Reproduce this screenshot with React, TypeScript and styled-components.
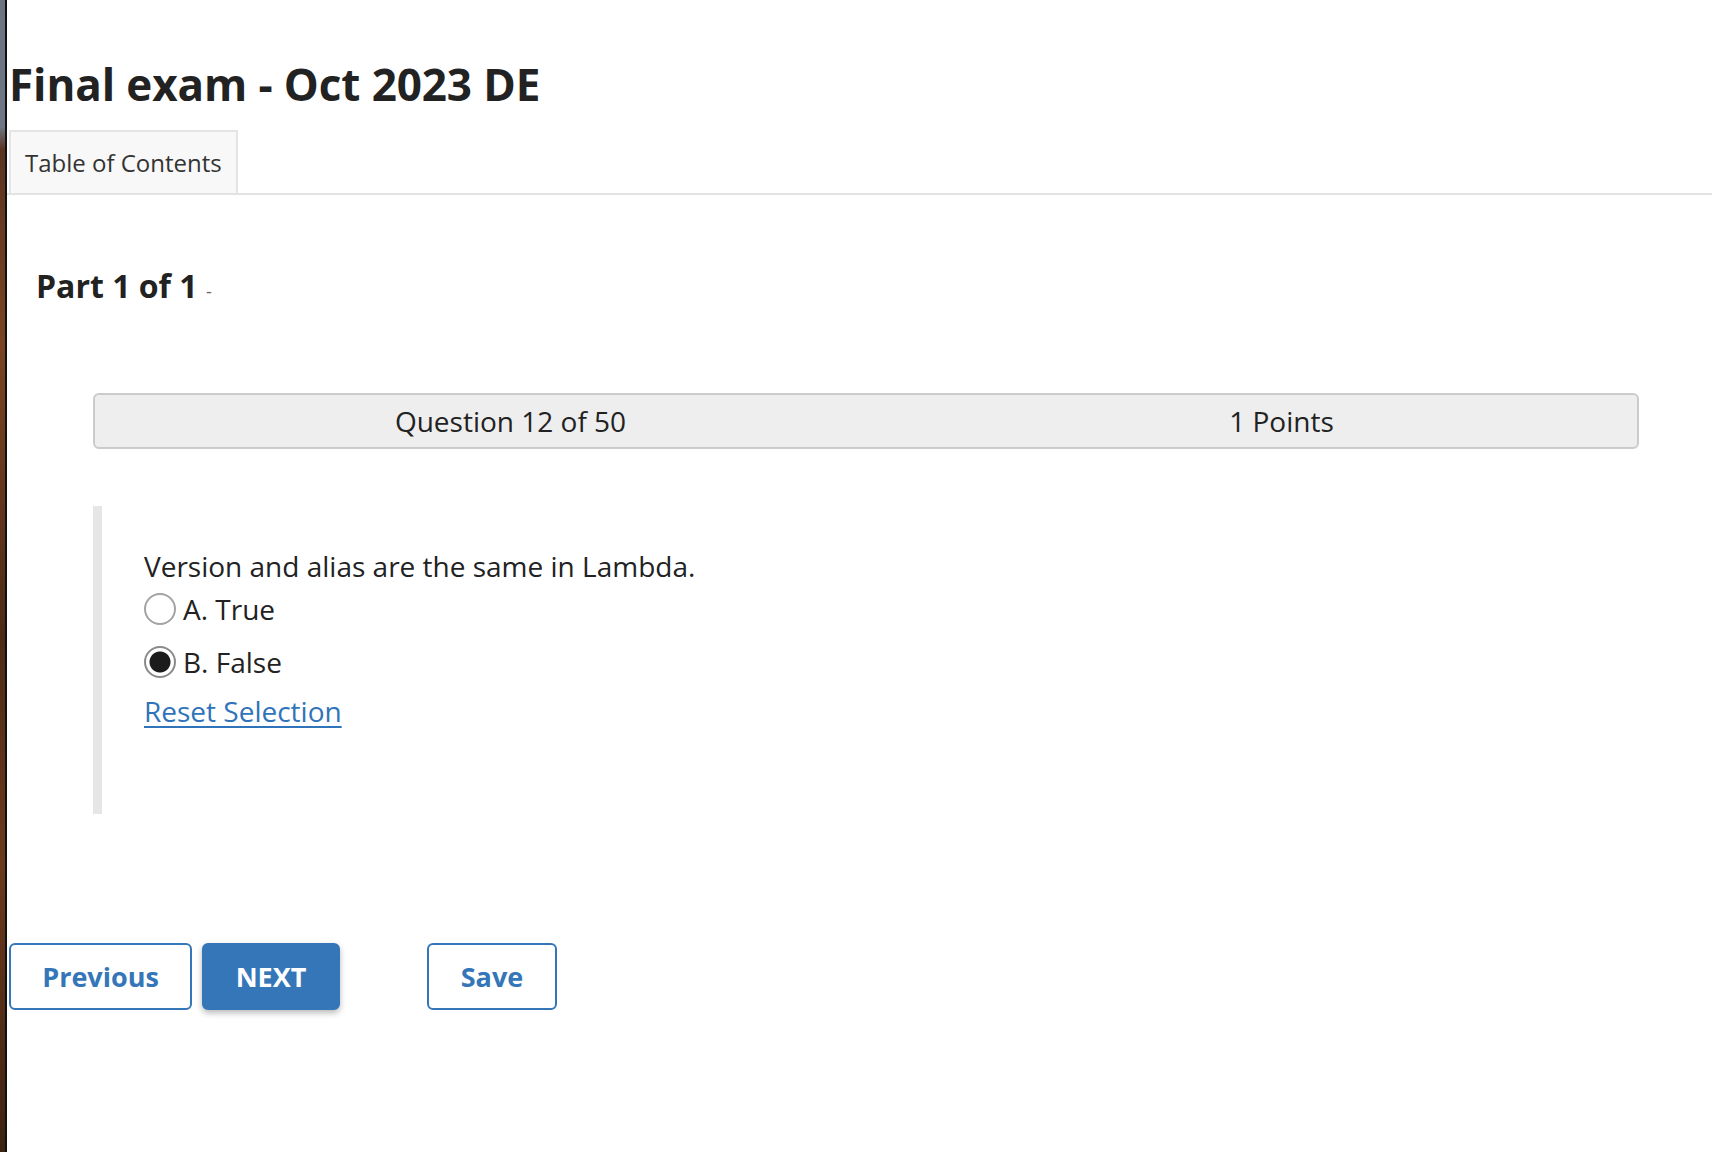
import React from "react";
import styled, { createGlobalStyle } from "styled-components";

const GlobalStyle = createGlobalStyle`
  html, body {
    margin: 0;
    padding: 0;
    background: #ffffff;
  }
  body {
    font-family: "Open Sans", "Noto Sans", Arial, sans-serif;
    color: #262626;
  }
`;

const App: React.FC = () => {
  return (
    <Page>
      <GlobalStyle />
      <DesktopEdge />
      <Main>
        <Title>Final exam - Oct 2023 DE</Title>
        <Tabs>
          <Tab>Table of Contents</Tab>
        </Tabs>
        <PartHeading>
          Part 1 of 1 <small>-</small>
        </PartHeading>
        <QuestionBar>
          <span>Question 12 of 50</span>
          <span>1 Points</span>
        </QuestionBar>
        <QuestionBody>
          <QuestionText>Version and alias are the same in Lambda.</QuestionText>
          <Options>
            <Option>
              <Radio type="radio" name="q12" />
              A. True
            </Option>
            <Option>
              <Radio type="radio" name="q12" defaultChecked />
              B. False
            </Option>
          </Options>
          <ResetLink href="#">Reset Selection</ResetLink>
        </QuestionBody>
        <Actions>
          <Button width={183}>Previous</Button>
          <Button width={138} primary>
            NEXT
          </Button>
          <SaveButton width={130}>Save</SaveButton>
        </Actions>
      </Main>
    </Page>
  );
};

const Page = styled.div`
  display: flex;
  min-height: 100vh;
  box-sizing: border-box;
`;

const DesktopEdge = styled.div`
  width: 5px;
  flex-shrink: 0;
  border-right: 2px solid #111;
  background: linear-gradient(
    180deg,
    #6c7482 0%,
    #6e7584 11%,
    #5a3320 13%,
    #7a4422 30%,
    #4e2a16 55%,
    #6b3a1c 75%,
    #3d2212 100%
  );
`;

const Main = styled.div`
  flex: 1;
  display: flex;
  flex-direction: column;
`;

const Title = styled.h1`
  margin: 58px 0 19px 2px;
  font-size: 44px;
  line-height: 53px;
  font-weight: 700;
  color: #222;
  letter-spacing: -0.1px;
`;

const Tabs = styled.div`
  display: flex;
  border-bottom: 2px solid #e3e3e3;
  padding-left: 2px;
`;

const Tab = styled.div`
  display: flex;
  align-items: center;
  height: 61px;
  padding: 0 14px;
  background: #f8f8f8;
  border: 2px solid #e4e4e4;
  border-bottom: none;
  font-size: 24px;
  color: #333;
`;

const PartHeading = styled.h2`
  margin: 72px 0 0 29px;
  font-size: 32px;
  line-height: 37px;
  font-weight: 700;
  color: #222;
  small {
    font-size: 18px;
    font-weight: 400;
    color: #666;
  }
`;

const QuestionBar = styled.div`
  display: grid;
  grid-template-columns: 1fr 1fr;
  align-items: center;
  height: 52px;
  margin: 83px 73px 0 86px;
  background: #eeeeee;
  border: 2px solid #cbcbcb;
  border-radius: 6px;
  font-size: 28px;
  color: #222;
  span {
    text-align: center;
    padding-left: 60px;
  }
`;

const QuestionBody = styled.div`
  margin: 57px 0 0 86px;
  border-left: 9px solid #e6e6e6;
  padding: 40px 0 83px 42px;
  display: flex;
  flex-direction: column;
  align-items: flex-start;
  font-size: 28px;
  color: #222;
`;

const QuestionText = styled.div`
  line-height: 40px;
`;

const Options = styled.div`
  display: flex;
  flex-direction: column;
  gap: 13px;
  margin-top: 3px;
`;

const Option = styled.label`
  display: flex;
  align-items: center;
  gap: 7px;
  height: 40px;
  line-height: 40px;
`;

const Radio = styled.input`
  appearance: none;
  margin: 0;
  width: 32px;
  height: 32px;
  border-radius: 50%;
  border: 2px solid #a3a3a3;
  background: #fff;
  box-sizing: border-box;
  &:checked {
    border-color: #8a8a8a;
    background: radial-gradient(circle, #1c1c1c 0 10px, #fff 11px);
  }
`;

const ResetLink = styled.a`
  margin-top: 9px;
  line-height: 40px;
  color: #2f74ba;
  text-decoration: underline;
  text-underline-offset: 4px;
  text-decoration-thickness: 2px;
`;

const Actions = styled.div`
  display: flex;
  align-items: center;
  gap: 10px;
  margin: 129px 0 0 2px;
`;

const Button = styled.button<{ primary?: boolean; width: number }>`
  width: ${(p) => p.width}px;
  height: 67px;
  padding: 0;
  border-radius: 6px;
  border: 2px solid #3476b8;
  background: ${(p) => (p.primary ? "#3476b8" : "#ffffff")};
  color: ${(p) => (p.primary ? "#ffffff" : "#3476b8")};
  box-shadow: ${(p) => (p.primary ? "0 3px 6px rgba(0, 0, 0, 0.28)" : "none")};
  font-family: "Open Sans", "Noto Sans", Arial, sans-serif;
  font-size: 27px;
  font-weight: 700;
  cursor: pointer;
`;

const SaveButton = styled(Button)`
  margin-left: 77px;
`;

export default App;
